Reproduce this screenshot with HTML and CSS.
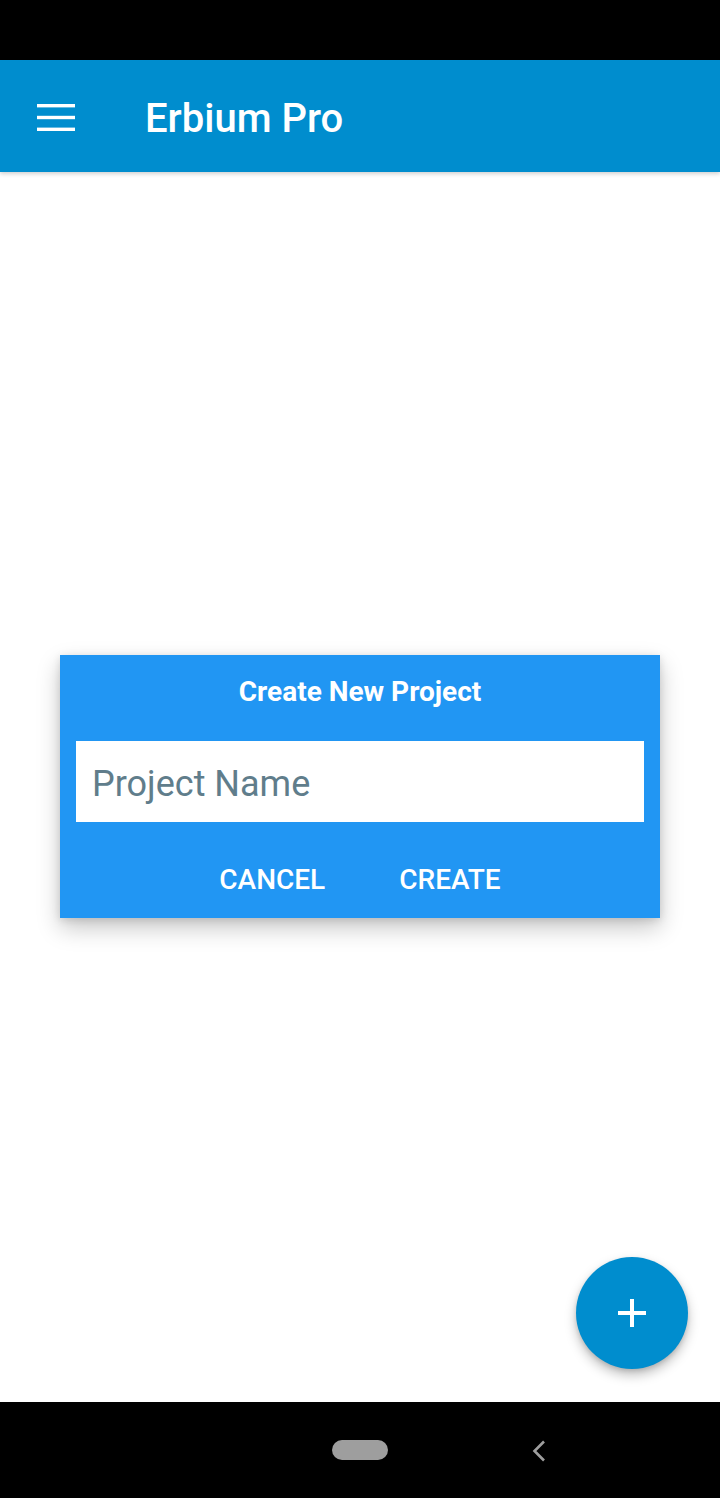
FILE: index.html
```html
<!DOCTYPE html>
<html>
<head>
<meta charset="utf-8">
<link rel="stylesheet" href="styles.css">
</head>
<body>
<div class="screen">
  <div class="status-bar"></div>
  <header class="app-bar">
    <svg class="menu-icon" width="38" height="27" viewBox="0 0 38 27">
      <rect x="0" y="0" width="38" height="3.4" fill="#fff"/>
      <rect x="0" y="11.8" width="38" height="3.4" fill="#fff"/>
      <rect x="0" y="23.6" width="38" height="3.4" fill="#fff"/>
    </svg>
    <h1 class="app-title">Erbium Pro</h1>
  </header>
  <main class="content">
    <div class="dialog">
      <div class="dialog-title">Create New Project</div>
      <div class="dialog-input">Project Name</div>
      <div class="dialog-actions">
        <span class="btn">CANCEL</span>
        <span class="btn">CREATE</span>
      </div>
    </div>
    <div class="fab">
      <svg width="28" height="28" viewBox="0 0 28 28">
        <rect x="0" y="12" width="28" height="4" fill="#fff"/>
        <rect x="12" y="0" width="4" height="28" fill="#fff"/>
      </svg>
    </div>
  </main>
  <footer class="nav-bar">
    <span class="home-pill"></span>
    <svg class="back" width="14" height="22" viewBox="0 0 14 22">
      <polyline points="12,1.5 2.5,11 12,20.5" fill="none" stroke="#9e9e9e" stroke-width="2.6"/>
    </svg>
  </footer>
</div>
</body>
</html>
```

FILE: styles.css
```css
* { box-sizing: border-box; }
html, body { margin: 0; padding: 0; }
body {
  font-family: Roboto, "Noto Sans", sans-serif;
  background: #fff;
}
.screen {
  width: 720px;
  height: 1498px;
  display: flex;
  flex-direction: column;
  overflow: hidden;
}
.status-bar {
  height: 60px;
  background: #000;
  flex: none;
}
.app-bar {
  height: 112px;
  flex: none;
  background: #008dce;
  display: flex;
  align-items: center;
  padding-left: 37px;
  box-shadow: 0 2px 4px rgba(0,0,0,0.18);
  position: relative;
  z-index: 2;
}
.menu-icon { display: block; margin-top: 2px; }
.app-title {
  margin: 0 0 0 70px;
  color: #fff;
  font-size: 40px;
  font-weight: 500;
  letter-spacing: 0;
  line-height: 1;
  padding-top: 5px;
}
.content {
  flex: 1;
  position: relative;
  display: flex;
  align-items: center;
  justify-content: center;
}
.dialog {
  width: 600px;
  height: 263px;
  background: #2196f3;
  box-shadow: 0 10px 22px rgba(0,0,0,0.22), 0 2px 8px rgba(0,0,0,0.12);
  display: flex;
  flex-direction: column;
  align-items: stretch;
  padding: 0 16px;
  margin-top: -1px;
}
.dialog-title {
  color: #fff;
  font-weight: 700;
  font-size: 28px;
  text-align: center;
  line-height: 30px;
  margin-top: 22px;
  height: 30px;
}
.dialog-input {
  margin-top: 34px;
  height: 81px;
  background: #fff;
  color: #607d8b;
  font-size: 36px;
  padding-left: 16px;
  display: flex;
  align-items: center;
  padding-top: 5px;
}
.dialog-actions {
  display: flex;
  justify-content: center;
  gap: 74px;
  margin-top: 42px;
}
.btn {
  color: #fff;
  font-size: 28px;
  font-weight: 500;
  line-height: 32px;
}
.fab {
  position: absolute;
  right: 32px;
  bottom: 33px;
  width: 112px;
  height: 112px;
  border-radius: 50%;
  background: #008dce;
  box-shadow: 0 6px 12px rgba(0,0,0,0.25), 0 2px 4px rgba(0,0,0,0.12);
  display: flex;
  align-items: center;
  justify-content: center;
}
.fab svg { display: block; }
.nav-bar {
  height: 96px;
  flex: none;
  background: #000;
  position: relative;
  display: flex;
  align-items: center;
}
.home-pill {
  position: absolute;
  left: 332px;
  top: 38px;
  width: 56px;
  height: 20px;
  border-radius: 10px;
  background: #9e9e9e;
}
.back {
  position: absolute;
  left: 532px;
  top: 38px;
}
```
